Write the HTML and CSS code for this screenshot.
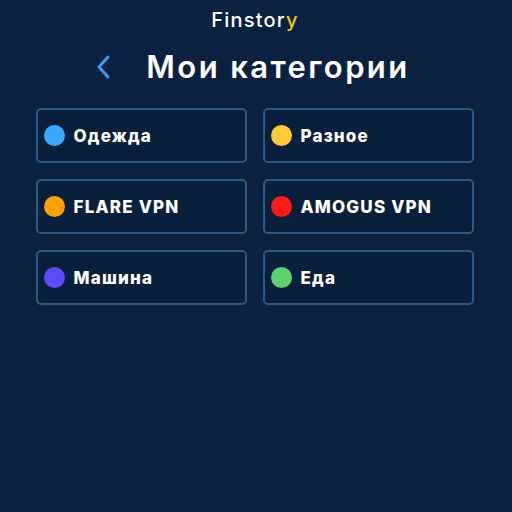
FILE: index.html
```html
<!DOCTYPE html>
<html lang="ru">
<head>
<meta charset="utf-8">
<link rel="stylesheet" href="styles.css">
</head>
<body>
<div class="app">
  <div class="brand">Finstor<span class="accent">y</span></div>
  <div class="header">
    <svg class="back" width="16" height="26" viewBox="0 0 16 26"><path d="M13 3 L4 13 L13 23" fill="none" stroke="#3d9cf0" stroke-width="3" stroke-linecap="round" stroke-linejoin="round"/></svg>
    <h1 class="title">Мои категории</h1>
  </div>
  <div class="grid">
    <div class="card"><span class="dot" style="background:#3aa8ff"></span><span class="name">Одежда</span></div>
    <div class="card"><span class="dot" style="background:#ffc93c"></span><span class="name">Разное</span></div>
    <div class="card"><span class="dot" style="background:#ff9f0a"></span><span class="name">FLARE VPN</span></div>
    <div class="card"><span class="dot" style="background:#ff1a1a"></span><span class="name">AMOGUS VPN</span></div>
    <div class="card"><span class="dot" style="background:#5f4bff"></span><span class="name">Машина</span></div>
    <div class="card"><span class="dot" style="background:#5fd06e"></span><span class="name">Еда</span></div>
  </div>
</div>
</body>
</html>
```
FILE: styles.css
```css
html, body {
  margin: 0;
  padding: 0;
  background: #0a2240;
  height: 100%;
}
body {
  font-family: "Inter", "Noto Sans", sans-serif;
  color: #ffffff;
}
.app {
  display: flex;
  flex-direction: column;
  align-items: center;
  padding-top: 8px;
}
.brand {
  font-size: 20px;
  font-weight: 500;
  line-height: 24px;
  letter-spacing: 1.2px;
  margin-left: -2px;
}
.accent {
  color: #f5c518;
}
.header {
  display: flex;
  align-items: center;
  gap: 35px;
  margin-top: 17px;
  margin-left: -5px;
}
.back {
  display: block;
  margin-left: -2px;
}
.title {
  margin: 0;
  font-size: 31px;
  font-weight: 600;
  line-height: 36px;
  letter-spacing: 2.4px;
}
.grid {
  display: grid;
  grid-template-columns: 211px 211px;
  column-gap: 16px;
  row-gap: 16px;
  margin-top: 23px;
  margin-left: -3px;
}
.card {
  box-sizing: border-box;
  height: 55px;
  border: 2px solid #2a5a8c;
  border-radius: 5px;
  background: #08203b;
  display: flex;
  align-items: center;
  padding-left: 6px;
  gap: 9px;
}
.dot {
  width: 21px;
  height: 21px;
  border-radius: 50%;
  flex: none;
}
.name {
  font-size: 17px;
  font-weight: 800;
  letter-spacing: 1.2px;
}
```
